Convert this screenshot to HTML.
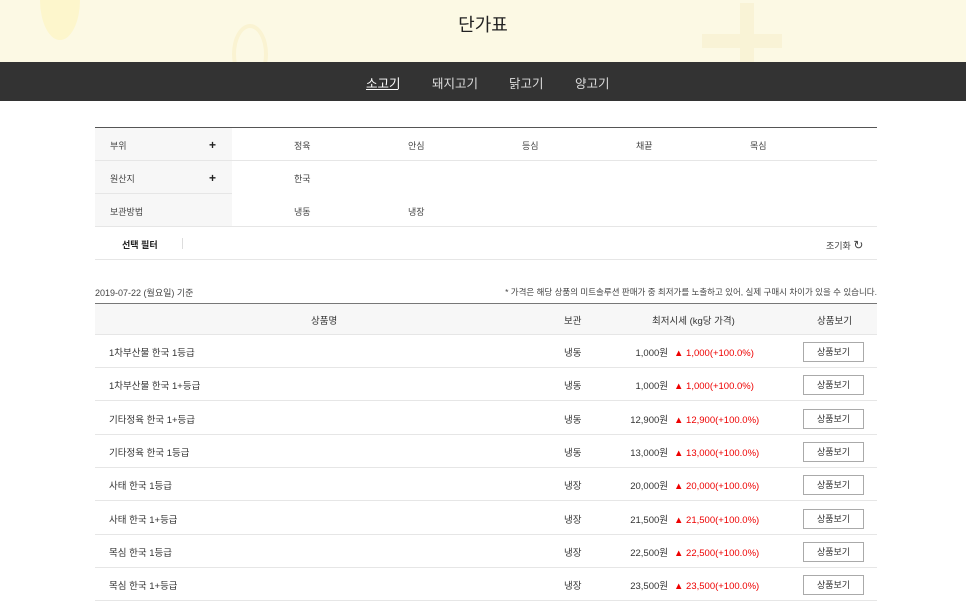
<!DOCTYPE html>
<html><head><meta charset="utf-8"><style>
*{margin:0;padding:0;box-sizing:border-box}
body{width:966px;height:598px;overflow:hidden;background:#fff;font-family:"Liberation Sans","Noto Sans CJK KR",sans-serif;color:#333;position:relative}
.hdr{position:absolute;left:0;top:0;width:966px;height:62px;background:#fcf9e4;overflow:hidden}
.hdr h1{position:absolute;left:0;right:0;top:11px;text-align:center;font-size:18px;font-weight:normal;color:#222}
.nav{position:absolute;top:62px;left:0;width:966px;height:39px;background:#333;color:#ddd;font-size:12.5px}
.nav span{position:absolute;top:11px}
.f{position:absolute;left:95px;width:782px;font-size:9px;color:#444}
.ab{position:absolute}
.row{position:absolute;left:95px;width:782px;height:33px;border-bottom:1px solid #e6e6e6;font-size:9.5px}
.row span{position:absolute;top:2px;line-height:33px;height:33px}
.btn{position:absolute;left:708px;top:7px;width:61px;height:20px;border:1px solid #aaa;font-size:9px;text-align:center;line-height:18px;background:#fff}
.red{color:#e00}
.plus{position:absolute;left:114px;top:-1px;font-size:12px;font-weight:bold;color:#222}
</style></head><body>
<div class="hdr">
<div class="ab" style="left:40px;top:-40px;width:40px;height:80px;border-radius:50%;background:#fdf6cc"></div>
<div class="ab" style="left:232px;top:24px;width:36px;height:60px;border-radius:50%;border:4px solid #faf3d2"></div>
<div class="ab" style="left:740px;top:3px;width:14px;height:60px;background:#f9f3d6"></div>
<div class="ab" style="left:702px;top:34px;width:80px;height:14px;background:#f9f3d6"></div>
<h1>단가표</h1></div>
<div class="nav">
<span style="left:366px;color:#fff">소고기</span>
<div class="ab" style="left:366px;top:27px;width:32px;height:1px;background:#fff"></div>
<span style="left:432px">돼지고기</span>
<span style="left:509px">닭고기</span>
<span style="left:575px">양고기</span>
</div>
<div class="ab" style="left:95px;top:127px;width:782px;height:1px;background:#555"></div>
<div class="ab" style="left:95px;top:128px;width:137px;height:98px;background:#f7f7f7"></div>
<div class="ab" style="left:95px;top:160px;width:782px;height:1px;background:#e6e6e6"></div>
<div class="ab" style="left:95px;top:193px;width:137px;height:1px;background:#e6e6e6"></div>
<div class="ab" style="left:95px;top:226px;width:782px;height:1px;background:#e6e6e6"></div>
<div class="ab" style="left:95px;top:259px;width:782px;height:1px;background:#e6e6e6"></div>
<div class="f" style="top:139px"><span class="ab" style="left:15px">부위</span><span class="plus">+</span><span class="ab" style="left:199px">정육</span><span class="ab" style="left:313px">안심</span><span class="ab" style="left:427px">등심</span><span class="ab" style="left:541px">채끝</span><span class="ab" style="left:655px">목심</span></div>
<div class="f" style="top:172px"><span class="ab" style="left:15px">원산지</span><span class="plus">+</span><span class="ab" style="left:199px">한국</span></div>
<div class="f" style="top:205px"><span class="ab" style="left:15px">보관방법</span><span class="ab" style="left:199px">냉동</span><span class="ab" style="left:313px">냉장</span></div>
<div class="f" style="top:238px"><span class="ab" style="left:27px;font-weight:bold;color:#222">선택 필터</span><span class="ab" style="left:87px;top:0;width:1px;height:11px;background:#ddd"></span><span class="ab" style="left:731px">조기화 <span style="font-size:12px">↻</span></span></div>
<div class="f" style="top:286px"><span class="ab" style="left:0">2019-07-22 (월요일) 기준</span><span class="ab" style="right:0;font-size:8.5px">* 가격은 해당 상품의 미트솔루션 판매가 중 최저가를 노출하고 있어, 실제 구매시 차이가 있을 수 있습니다.</span></div>
<div class="ab" style="left:95px;top:303px;width:782px;height:1px;background:#777"></div>
<div class="row" style="top:304px;height:31px;background:#f7f7f7"><span style="left:216px;line-height:31px">상품명</span><span style="left:469px;line-height:31px">보관</span><span style="left:557px;line-height:31px">최저시세 (kg당 가격)</span><span style="left:722px;line-height:31px">상품보기</span></div>
<div id="rows"></div>
<script>
var d=[["1차부산물 한국 1등급","냉동","1,000"],["1차부산물 한국 1+등급","냉동","1,000"],["기타정육 한국 1+등급","냉동","12,900"],["기타정육 한국 1등급","냉동","13,000"],["사태 한국 1등급","냉장","20,000"],["사태 한국 1+등급","냉장","21,500"],["목심 한국 1등급","냉장","22,500"],["목심 한국 1+등급","냉장","23,500"]];
var h="";d.forEach(function(r,i){var y=335+i*33.3;h+='<div class="row" style="top:'+y+'px"><span style="left:14px">'+r[0]+'</span><span style="left:469px">'+r[1]+'</span><span style="right:209px">'+r[2]+'원</span><span class="red" style="left:579px">▲ '+r[2]+'(+100.0%)</span><div class="btn">상품보기</div></div>';});
document.getElementById("rows").innerHTML=h;
</script>
</body></html>
